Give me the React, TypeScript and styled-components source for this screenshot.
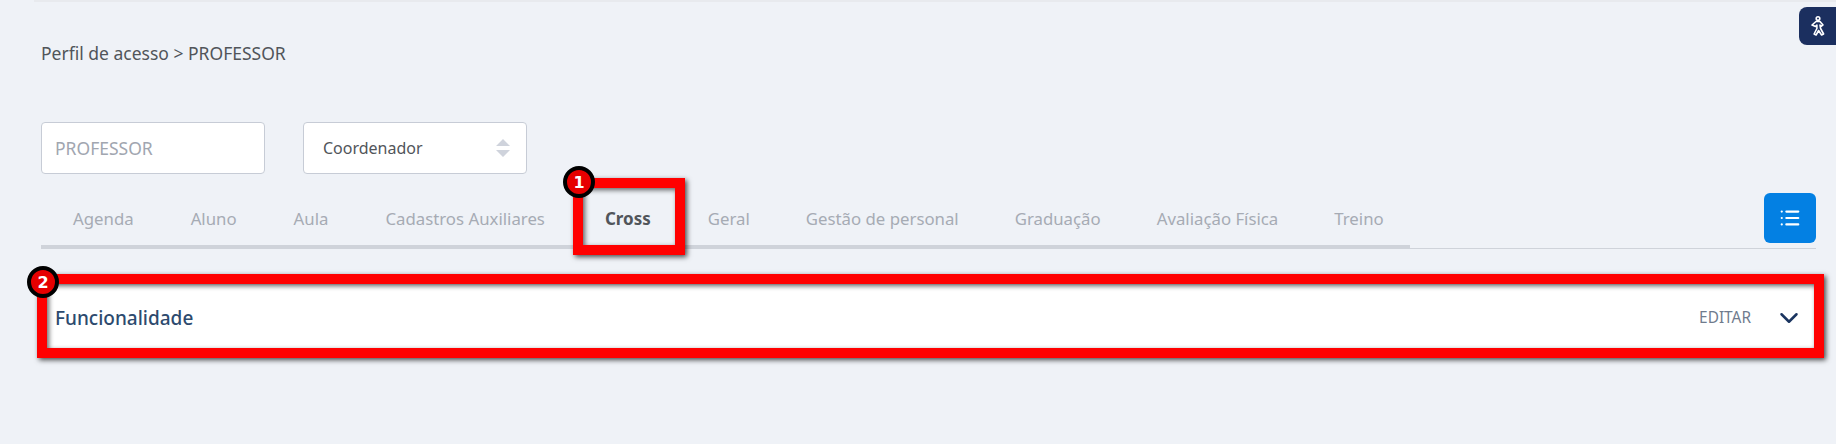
import React from 'react';
import styled, { createGlobalStyle } from 'styled-components';
import { ChevronDown, List } from 'lucide-react';

const GlobalStyle = createGlobalStyle`
  html, body {
    margin: 0;
    padding: 0;
    height: 444px;
    overflow: hidden;
    background: #eff2f7;
  }
  * {
    box-sizing: border-box;
  }
`;

const Page = styled.main`
  position: relative;
  height: 444px;
  padding: 0 20px 0 41px;
  font-family: 'Noto Sans', 'Liberation Sans', sans-serif;
  &::before {
    content: '';
    display: block;
    height: 2px;
    margin-left: -7px;
    margin-right: -20px;
    background: #e8eaee;
  }
`;

const Breadcrumb = styled.div`
  margin-top: 40px;
  height: 22px;
  font-size: 17.5px;
  line-height: 22px;
  color: #51555a;
`;

const Filters = styled.section`
  display: flex;
  gap: 38px;
  margin-top: 58px;
`;

const Field = styled.div<{ $muted?: boolean }>`
  display: flex;
  align-items: center;
  justify-content: space-between;
  width: 224px;
  height: 52px;
  padding: ${(p) => (p.$muted ? '0 13px' : '0 15px 0 19px')};
  background: #fff;
  border: 1px solid #c7ccd6;
  border-radius: 4px;
  font-size: ${(p) => (p.$muted ? '17.5px' : '16px')};
  color: ${(p) => (p.$muted ? '#a1a6b0' : '#51555a')};
`;

const Tabs = styled.nav`
  display: flex;
  align-items: flex-end;
  justify-content: space-between;
  margin-top: 19px;
  height: 56px;
  border-bottom: 1px solid #cfd3da;
`;

const TabList = styled.ul`
  display: flex;
  width: 1369px;
  height: 56px;
  margin: 0 0 -1px;
  padding: 0 0 0 32px;
  list-style: none;
  border-bottom: 4px solid #cfd3da;
`;

const Tab = styled.li<{ $active?: boolean; $tight?: boolean }>`
  margin-left: ${(p) => (p.$active ? '3px' : '0')};
  margin-right: ${(p) => (p.$tight ? '56px' : '57px')};
  padding-top: 15px;
  font-size: ${(p) => (p.$active ? '17px' : '16.8px')};
  line-height: 22px;
  white-space: nowrap;
  font-weight: ${(p) => (p.$active ? 700 : 400)};
  color: ${(p) => (p.$active ? '#51555a' : '#a6abb4')};
`;

const ListButton = styled.button`
  display: flex;
  align-items: center;
  justify-content: center;
  width: 52px;
  height: 50px;
  margin-bottom: 5px;
  padding: 0;
  color: #fff;
  background: #0380e3;
  border: 0;
  border-radius: 6px;
`;

const Card = styled.section`
  display: flex;
  align-items: center;
  height: 64px;
  margin: 36px -3px 0 6px;
  padding: 1px 0 0 8px;
  background: #fff;
`;

const CardTitle = styled.h2`
  flex: 1;
  margin: 0;
  font-size: 19px;
  font-weight: 500;
  color: #2d4a6e;
`;

const EditLabel = styled.span`
  font-size: 15.4px;
  color: #6f7b8d;
`;

const CardChevron = styled(ChevronDown)`
  margin: 0 15px 0 23px;
  color: #1b3560;
`;

const Highlight = styled.div<{ $box: [number, number, number, number] }>`
  position: absolute;
  left: ${(p) => p.$box[0]}px;
  top: ${(p) => p.$box[1]}px;
  width: ${(p) => p.$box[2]}px;
  height: ${(p) => p.$box[3]}px;
  border: 10px solid #ff0000;
  box-shadow: 2px 2px 5px rgba(0, 0, 0, 0.7), inset 2px 2px 5px rgba(0, 0, 0, 0.6);
`;

const Badge = styled.span<{ $x: number; $y: number }>`
  position: absolute;
  left: ${(p) => p.$x}px;
  top: ${(p) => p.$y}px;
  display: flex;
  align-items: center;
  justify-content: center;
  width: 32px;
  height: 32px;
  background: #e60000;
  border: 4px solid #000;
  border-radius: 50%;
  font-family: 'DejaVu Sans', sans-serif;
  font-size: 16px;
  font-weight: 700;
  color: #fff;
`;

const AccessWidget = styled.button`
  position: absolute;
  top: 7px;
  right: 0;
  display: flex;
  align-items: center;
  justify-content: center;
  width: 37px;
  height: 38px;
  padding: 0;
  background: #1b2f5f;
  border: 0;
  border-radius: 8px 0 0 8px;
`;

const tabs = [
  'Agenda',
  'Aluno',
  'Aula',
  'Cadastros Auxiliares',
  'Cross',
  'Geral',
  'Gestão de personal',
  'Graduação',
  'Avaliação Física',
  'Treino',
];

const App = () => {
  return (
    <>
      <GlobalStyle />
      <Page>
        <Breadcrumb>Perfil de acesso &gt; PROFESSOR</Breadcrumb>
        <Filters>
          <Field $muted>PROFESSOR</Field>
          <Field>
            Coordenador
            <svg width="16" height="20" viewBox="0 0 16 20">
              <path d="M8 1l7 7H1z M8 19l7-7H1z" fill="#cfd3dc" />
            </svg>
          </Field>
        </Filters>
        <Tabs>
          <TabList>
            {tabs.map((tab, i) => (
              <Tab key={tab} $active={tab === 'Cross'} $tight={i > 4}>
                {tab}
              </Tab>
            ))}
          </TabList>
          <ListButton>
            <List size={22} strokeWidth={2.4} />
          </ListButton>
        </Tabs>
        <Card>
          <CardTitle>Funcionalidade</CardTitle>
          <EditLabel>EDITAR</EditLabel>
          <CardChevron size={30} strokeWidth={2} />
        </Card>
        <Highlight $box={[573, 178, 112, 77]} />
        <Highlight $box={[37, 274, 1787, 84]} />
        <Badge $x={563} $y={166}>1</Badge>
        <Badge $x={27} $y={266}>2</Badge>
        <AccessWidget>
          <svg width="14" height="20" viewBox="0 0 14 20" fill="none" stroke="#fff" strokeWidth="1.6" strokeLinejoin="round">
            <circle cx="7" cy="2.6" r="1.8" />
            <path d="M5 5.5h4l3 3.5-1.5 1.2L9 9l.6 3.5 3 5.5-2 1-3-4.5-2.5 4.5-2-1 2.8-5.5V9l-1.4 1.5L1 9z" />
          </svg>
        </AccessWidget>
      </Page>
    </>
  );
};

App.displayName = 'App';
export default App;
